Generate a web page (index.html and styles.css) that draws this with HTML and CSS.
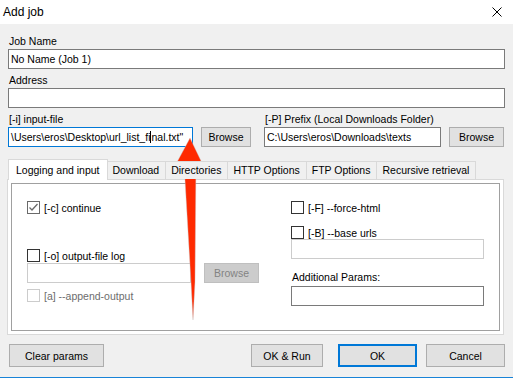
FILE: index.html
```html
<!DOCTYPE html>
<html lang="en">
<head>
    <meta charset="UTF-8">
    <title>Add job</title>
    <link rel="stylesheet" href="styles.css">
</head>
<body>
    <div class="window">
        <div class="titlebar">
            <span class="title">Add job</span>
            <svg class="close" width="10" height="10" viewBox="0 0 10 10">
                <path d="M0.5 0.5 L9.5 9.5 M9.5 0.5 L0.5 9.5" stroke="#000" stroke-width="1" fill="none"/>
            </svg>
        </div>

        <div class="content">
            <div class="field first">
                <div class="label">Job Name</div>
                <div class="textbox">No Name (Job 1)</div>
            </div>
            <div class="field">
                <div class="label">Address</div>
                <div class="textbox"></div>
            </div>

            <div class="field-row">
                <div class="field input-file">
                    <div class="label">[-i] input-file</div>
                    <div class="line">
                        <div class="textbox focused">\Users\eros\Desktop\url_list_fi<span class="caret"></span>nal.txt"</div>
                        <button class="btn browse">Browse</button>
                    </div>
                </div>
                <div class="field prefix">
                    <div class="label">[-P] Prefix (Local Downloads Folder)</div>
                    <div class="line">
                        <div class="textbox">C:\Users\eros\Downloads\texts</div>
                        <button class="btn browse">Browse</button>
                    </div>
                </div>
            </div>

            <div class="tabs">
                <div class="tab active">Logging and input</div>
                <div class="tab">Download</div>
                <div class="tab">Directories</div>
                <div class="tab">HTTP Options</div>
                <div class="tab">FTP Options</div>
                <div class="tab">Recursive retrieval</div>
            </div>

            <div class="tab-panel">
                <div class="group">
                    <div class="col left">
                        <div class="check-row"><span class="check checked"><svg width="11" height="11" viewBox="0 0 11 11"><path d="M1.5 5.5 L4 8 L9.5 2" stroke="#6a6a6a" stroke-width="1.3" fill="none"/></svg></span>[-c] continue</div>
                        <div class="check-row output-log"><span class="check"></span>[-o] output-file log</div>
                        <div class="line">
                            <div class="textbox disabled log-path"></div>
                            <button class="btn disabled log-browse">Browse</button>
                        </div>
                        <div class="check-row disabled append"><span class="check"></span>[a] --append-output</div>
                    </div>
                    <div class="col right">
                        <div class="check-row narrow"><span class="check"></span>[-F] --force-html</div>
                        <div class="check-row narrow base"><span class="check"></span>[-B] --base urls</div>
                        <div class="textbox disabled"></div>
                        <div class="label params">Additional Params:</div>
                        <div class="textbox"></div>
                    </div>
                </div>
            </div>

            <div class="footer">
                <button class="btn big clear">Clear params</button>
                <div class="actions">
                    <button class="btn big run">OK &amp; Run</button>
                    <button class="btn big ok default">OK</button>
                    <button class="btn big cancel">Cancel</button>
                </div>
            </div>
        </div>

        <!-- red annotation arrow pointing at the input-file box -->
        <svg class="arrow" width="513" height="378" viewBox="0 0 513 378">
            <polygon points="190,138 202,163 196,162 195,282 193,320 191,282 184,163 176,164"
                     fill="#ff2a00" stroke="#c8c8c8" stroke-width="0.4"/>
        </svg>
    </div>
</body>
</html>
```

FILE: styles.css
```css
* {
    box-sizing: border-box;
}
body {
    margin: 0;
    font-family: "Liberation Sans", Arial, sans-serif;
    font-size: 10.5px;
    color: #000;
}
.window {
    position: relative;
    width: 513px;
    height: 378px;
    background: #f0f0f0;
    border-bottom: 1px solid #1883d7;
    overflow: hidden;
}
.titlebar {
    height: 24px;
    background: #fff;
    display: flex;
    align-items: center;
    justify-content: space-between;
    padding: 0 11px 0 3px;
}
.title {
    font-size: 12px;
}
.content {
    padding: 0 8px;
}
.field {
    margin-top: 4px;
}
.field.first {
    margin-top: 10px;
}
.label {
    line-height: 14px;
    margin-bottom: 1px;
    padding-left: 1px;
}
.textbox {
    height: 20px;
    background: #fff;
    border: 1px solid #7a7a7a;
    line-height: 18px;
    padding: 0 2px;
    white-space: nowrap;
    overflow: hidden;
}
.textbox.focused {
    border-color: #0078d7;
}
.textbox.disabled {
    border-color: #cccccc;
}
.caret {
    display: inline-block;
    width: 1px;
    height: 12px;
    background: #000;
    vertical-align: -2px;
}
.line {
    display: flex;
    align-items: flex-start;
}
.field-row {
    display: flex;
    gap: 13px;
}
.input-file .textbox {
    width: 185px;
    margin-right: 8px;
}
.prefix .textbox {
    width: 177px;
    margin-right: 8px;
}
.input-file .browse {
    width: 50px;
}
.prefix .browse {
    width: 55px;
}
.btn {
    height: 20px;
    background: #e1e1e1;
    border: 1px solid #adadad;
    font-family: "Liberation Sans", Arial, sans-serif;
    font-size: 10.5px;
    color: #000;
    padding: 0;
}
.btn.disabled {
    background: #cccccc;
    border-color: #bfbfbf;
    color: #838383;
}

/* tabs */
.tabs {
    display: flex;
    align-items: flex-end;
    height: 21px;
    margin-top: 11px;
    position: relative;
    z-index: 1;
}
.tab {
    height: 18px;
    line-height: 17px;
    padding: 0 6px 0 5px;
    font-size: 10.5px;
    border: 1px solid #d9d9d9;
    border-left: none;
    border-bottom: none;
    background: #f0f0f0;
    white-space: nowrap;
}
.tab.active {
    height: 21px;
    line-height: 20px;
    padding: 0 7px;
    background: #fff;
    border-left: 1px solid #d9d9d9;
    margin-bottom: -1px;
}
.tab-panel {
    margin-left: -1px;
    width: 497px;
    height: 156px;
    background: #fff;
    border: 1px solid #d9d9d9;
    padding: 3px;
}
.group {
    height: 148px;
    border: 1px solid #a0a0a0;
    display: grid;
    grid-template-columns: 232px 193px;
    column-gap: 32px;
    padding: 17px 0 0 15px;
}
.check-row {
    display: flex;
    align-items: center;
    height: 13px;
    white-space: nowrap;
}
.check {
    width: 13px;
    height: 13px;
    border: 1px solid #333;
    background: #fff;
    margin-right: 4px;
    flex-shrink: 0;
    display: flex;
    align-items: center;
    justify-content: center;
}
.check.checked {
    border-color: #6a6a6a;
}
.check-row.disabled {
    color: #6d6d6d;
}
.check-row.disabled .check {
    border-color: #cccccc;
}
.output-log {
    margin-top: 35px;
}
.log-path {
    width: 164px;
    margin-top: 1px;
    margin-right: 13px;
}
.log-browse {
    width: 55px;
    margin-top: 1px;
}
.append {
    margin-top: 6px;
}
.base {
    margin-top: 12px;
}
.params {
    margin-top: 11px;
    margin-bottom: 2px;
}

/* bottom buttons */
.footer {
    display: flex;
    justify-content: space-between;
    margin-top: 9px;
    padding-left: 1px;
}
.actions {
    display: flex;
}
.btn.big {
    height: 23px;
}
.clear {
    width: 95px;
}
.run {
    width: 72px;
    margin-right: 15px;
}
.ok {
    width: 79px;
    margin-right: 9px;
}
.cancel {
    width: 79px;
}
.btn.default {
    border: 2px solid #0078d7;
}
.arrow {
    position: absolute;
    left: 0;
    top: 0;
    pointer-events: none;
}
```
